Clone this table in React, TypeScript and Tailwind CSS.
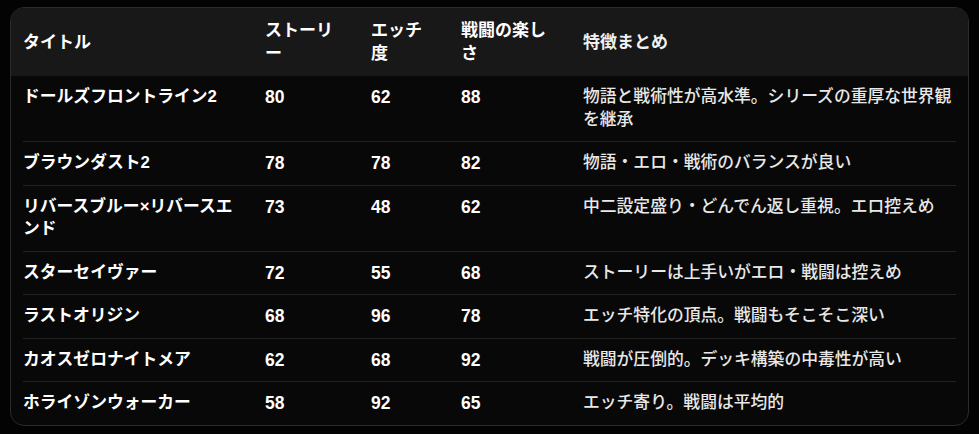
const rows = [
  { title: "ドールズフロントライン2", story: 80, ecchi: 62, battle: 88, note: "物語と戦術性が高水準。シリーズの重厚な世界観を継承" },
  { title: "ブラウンダスト2", story: 78, ecchi: 78, battle: 82, note: "物語・エロ・戦術のバランスが良い" },
  { title: "リバースブルー×リバースエンド", story: 73, ecchi: 48, battle: 62, note: "中二設定盛り・どんでん返し重視。エロ控えめ" },
  { title: "スターセイヴァー", story: 72, ecchi: 55, battle: 68, note: "ストーリーは上手いがエロ・戦闘は控えめ" },
  { title: "ラストオリジン", story: 68, ecchi: 96, battle: 78, note: "エッチ特化の頂点。戦闘もそこそこ深い" },
  { title: "カオスゼロナイトメア", story: 62, ecchi: 68, battle: 92, note: "戦闘が圧倒的。デッキ構築の中毒性が高い" },
  { title: "ホライゾンウォーカー", story: 58, ecchi: 92, battle: 65, note: "エッチ寄り。戦闘は平均的" },
];

const cols = "grid grid-cols-[242px_106px_90px_122px_1fr]";

export default function App() {
  return (
    <div
      className="min-h-screen bg-[#030303] px-[10px] pb-[9px] pt-[7px]"
      style={{ fontFamily: '"Liberation Sans", "Noto Sans CJK JP", sans-serif' }}
    >
      <div className="overflow-hidden rounded-[14px] border border-[#2a2a2a] bg-[#080808]">
        <div className={`${cols} items-center bg-[#181818] px-3 py-[11px] text-[17px] font-bold leading-[23px] text-white`}>
          <div className="pr-6">タイトル</div>
          <div className="pr-6">ストーリー</div>
          <div className="pr-6">エッチ度</div>
          <div className="pr-6">戦闘の楽しさ</div>
          <div className="font-semibold text-[#f0f0f0]">特徴まとめ</div>
        </div>
        <div className="px-3">
          {rows.map((r, i) => (
            <div
              key={r.title}
              className={`${cols} py-[10px] text-[16.8px] leading-[22.5px] ${
                i < rows.length - 1 ? "border-b border-[#222222]" : ""
              }`}
            >
              <div className="pr-6 font-bold text-white">{r.title}</div>
              <div className="pr-6 text-[17.5px] font-bold text-white">{r.story}</div>
              <div className="pr-6 text-[17.5px] font-bold text-white">{r.ecchi}</div>
              <div className="pr-6 text-[17.5px] font-bold text-white">{r.battle}</div>
              <div className="font-medium text-[#e8e8e8]">{r.note}</div>
            </div>
          ))}
        </div>
      </div>
    </div>
  );
}
